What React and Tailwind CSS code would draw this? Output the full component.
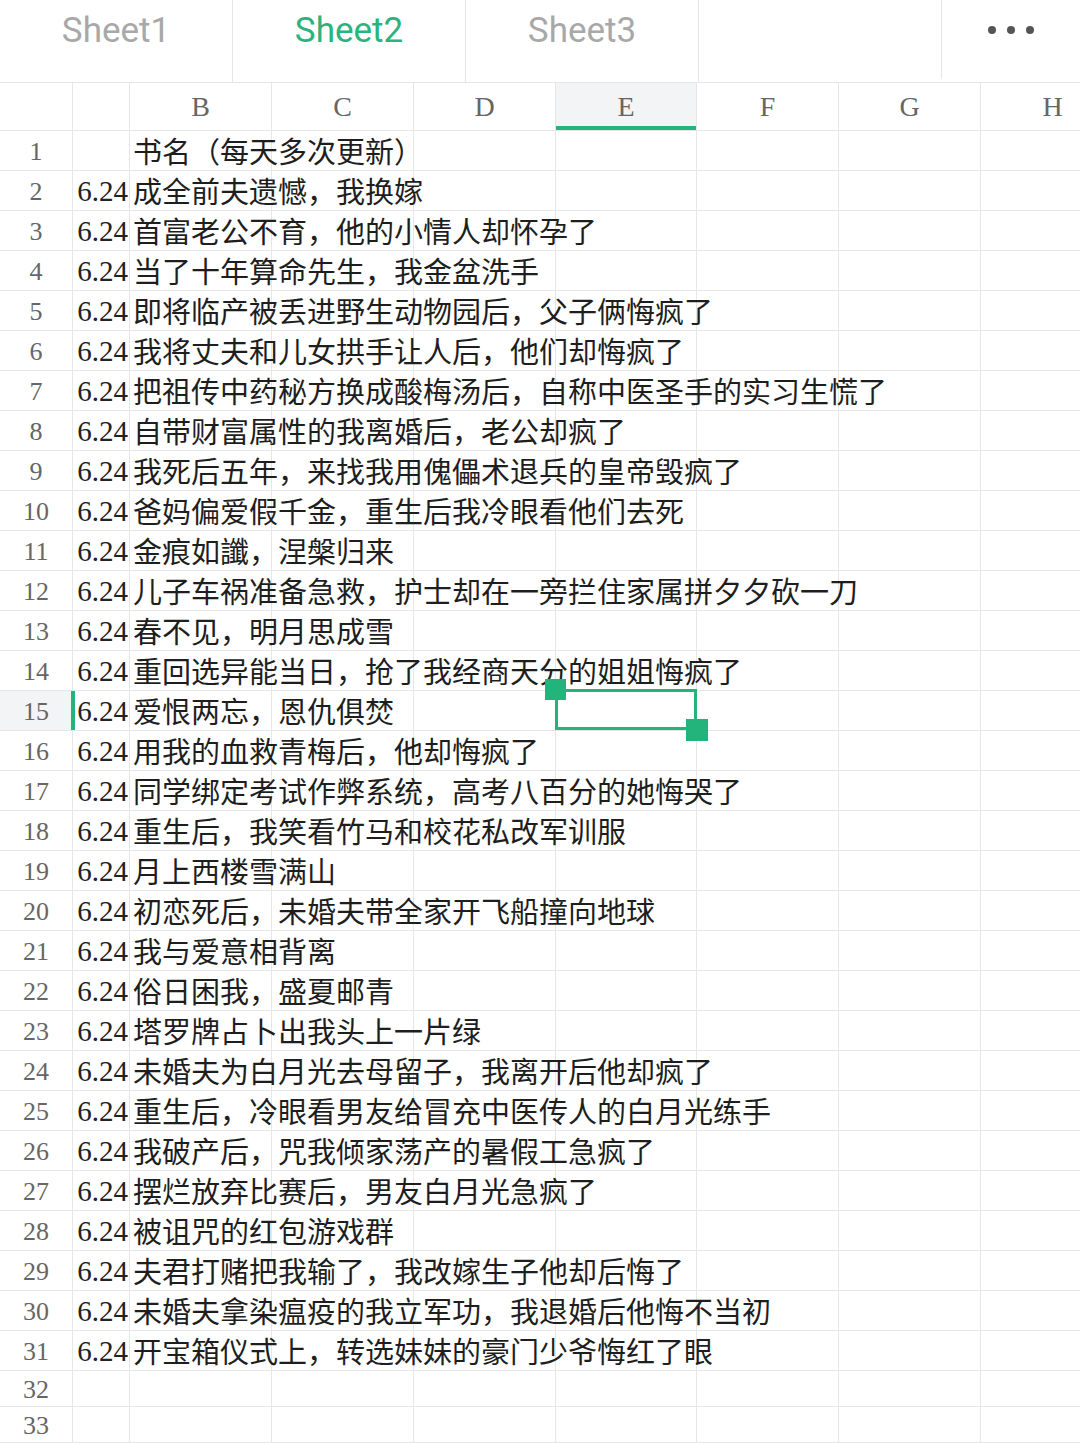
const rows = [
  ["", "书名（每天多次更新）"],
  ["6.24", "成全前夫遗憾，我换嫁"],
  ["6.24", "首富老公不育，他的小情人却怀孕了"],
  ["6.24", "当了十年算命先生，我金盆洗手"],
  ["6.24", "即将临产被丢进野生动物园后，父子俩悔疯了"],
  ["6.24", "我将丈夫和儿女拱手让人后，他们却悔疯了"],
  ["6.24", "把祖传中药秘方换成酸梅汤后，自称中医圣手的实习生慌了"],
  ["6.24", "自带财富属性的我离婚后，老公却疯了"],
  ["6.24", "我死后五年，来找我用傀儡术退兵的皇帝毁疯了"],
  ["6.24", "爸妈偏爱假千金，重生后我冷眼看他们去死"],
  ["6.24", "金痕如讖，涅槃归来"],
  ["6.24", "儿子车祸准备急救，护士却在一旁拦住家属拼夕夕砍一刀"],
  ["6.24", "春不见，明月思成雪"],
  ["6.24", "重回选异能当日，抢了我经商天分的姐姐悔疯了"],
  ["6.24", "爱恨两忘，恩仇俱焚"],
  ["6.24", "用我的血救青梅后，他却悔疯了"],
  ["6.24", "同学绑定考试作弊系统，高考八百分的她悔哭了"],
  ["6.24", "重生后，我笑看竹马和校花私改军训服"],
  ["6.24", "月上西楼雪满山"],
  ["6.24", "初恋死后，未婚夫带全家开飞船撞向地球"],
  ["6.24", "我与爱意相背离"],
  ["6.24", "俗日困我，盛夏邮青"],
  ["6.24", "塔罗牌占卜出我头上一片绿"],
  ["6.24", "未婚夫为白月光去母留子，我离开后他却疯了"],
  ["6.24", "重生后，冷眼看男友给冒充中医传人的白月光练手"],
  ["6.24", "我破产后，咒我倾家荡产的暑假工急疯了"],
  ["6.24", "摆烂放弃比赛后，男友白月光急疯了"],
  ["6.24", "被诅咒的红包游戏群"],
  ["6.24", "夫君打赌把我输了，我改嫁生子他却后悔了"],
  ["6.24", "未婚夫拿染瘟疫的我立军功，我退婚后他悔不当初"],
  ["6.24", "开宝箱仪式上，转选妹妹的豪门少爷悔红了眼"],
  ["", ""],
  ["", ""],
];

const cols = ["B", "C", "D", "E", "F", "G", "H"];
const colW = ["w-[142px]", "w-[142px]", "w-[142px]", "w-[141px]", "w-[142px]", "w-[142px]", "w-[144px]"];

// latin digits/letters in Times-like serif, CJK falls back to Noto
const num = "font-[Liberation_Serif,serif]";
const cjk = "font-[Liberation_Serif,Noto_Sans_CJK_SC,serif]";

const App = () => {
  return (
    <div className="w-[1080px] h-[1443px] overflow-hidden bg-white">
      {/* sheet tabs */}
      <div className="flex h-[83px] border-b border-[#e6e6e6] font-[Roboto,sans-serif] text-[35px]">
        {["Sheet1", "Sheet2", "Sheet3"].map((s, i) => (
          <div
            key={s}
            className={`w-[233px] shrink-0 border-r border-[#e6e6e6] text-center pt-[10px] leading-[42px] ${
              i === 1 ? "text-[#2bb37e]" : "text-[#a8a8a8]"
            }`}
          >
            {s}
          </div>
        ))}
        <div className="w-[243px] shrink-0 mb-[3px] border-r border-[#e6e6e6]" />
        <div className="flex-1 flex justify-center gap-[11px] pt-[26px]">
          <span className="w-[8px] h-[8px] rounded-full bg-[#555]" />
          <span className="w-[8px] h-[8px] rounded-full bg-[#555]" />
          <span className="w-[8px] h-[8px] rounded-full bg-[#555]" />
        </div>
      </div>

      {/* column header */}
      <div className={`flex h-[48px] border-b border-[#e6e6e6] text-[28px] text-[#666] ${num}`}>
        <div className="w-[73px] shrink-0 border-r border-[#e6e6e6]" />
        <div className="w-[57px] shrink-0 border-r border-[#e6e6e6]" />
        {cols.map((c, i) => (
          <div
            key={c}
            className={`${colW[i]} shrink-0 border-r border-[#e6e6e6] flex items-center justify-center relative ${
              c === "E" ? "bg-[#f3f4f5]" : ""
            }`}
          >
            {c}
            {c === "E" && <div className="absolute left-0 right-0 bottom-0 h-[4px] bg-[#22b47a]" />}
          </div>
        ))}
      </div>

      {/* rows */}
      {rows.map(([d, t], r) => {
        const n = r + 1;
        const active = n === 15;
        return (
          <div key={n} className={`flex ${n > 31 ? "h-[36px]" : "h-[40px]"} border-b border-[#e6e6e6]`}>
            <div
              className={`w-[73px] shrink-0 border-r border-[#e6e6e6] flex items-center justify-center pt-[2px] text-[26px] text-[#666] relative ${num} ${
                active ? "bg-[#f3f4f5]" : ""
              }`}
            >
              {n}
              {active && <div className="absolute right-[-3px] top-0 bottom-0 w-[4px] bg-[#22b47a]" />}
            </div>
            <div
              className={`w-[57px] shrink-0 border-r border-[#e6e6e6] flex items-center justify-end pr-[1px] pt-[2px] text-[29px] text-[#222] ${num}`}
            >
              {d}
            </div>
            {cols.map((c, i) => (
              <div key={c} className={`${colW[i]} shrink-0 border-r border-[#e6e6e6] relative flex items-center`}>
                {c === "B" && t && (
                  <span
                    className={`relative z-10 pl-[3px] pt-[5px] whitespace-nowrap text-[29px] leading-none text-[#1e1e1e] ${cjk}`}
                  >
                    {t}
                  </span>
                )}
                {c === "E" && active && (
                  <div className="absolute z-20 left-[-1px] top-[-2px] w-[142px] h-[41px] pointer-events-none">
                    <div className="absolute left-0 top-0 right-0 bottom-0 border-[3px] border-[#22b47a]" />
                    <div className="absolute left-[-10px] top-[-10px] w-[21px] h-[21px] bg-[#22b47a]" />
                    <div className="absolute right-[-11px] bottom-[-11px] w-[22px] h-[22px] bg-[#22b47a]" />
                  </div>
                )}
              </div>
            ))}
          </div>
        );
      })}
    </div>
  );
};

export default App;
